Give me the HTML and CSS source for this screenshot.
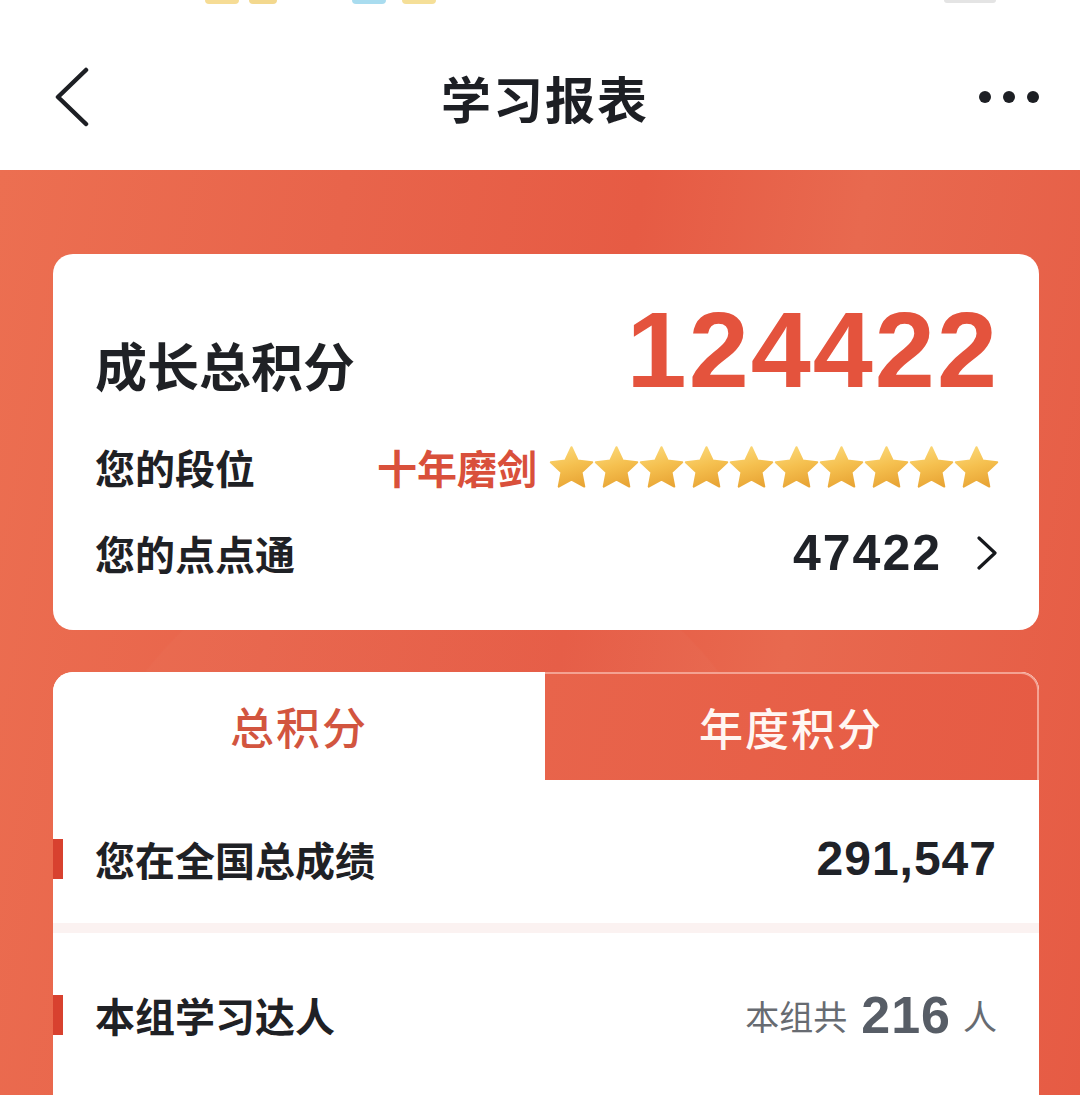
FILE: index.html
```html
<!DOCTYPE html>
<html lang="zh-CN">
<head>
<meta charset="utf-8">
<title>学习报表</title>
<link rel="stylesheet" href="styles.css">
</head>
<body>
<svg class="defs" width="0" height="0" aria-hidden="true">
  <defs>
    <linearGradient id="gold" x1="0.2" y1="0" x2="0.5" y2="1">
      <stop offset="0" stop-color="#fbd878"/>
      <stop offset="0.5" stop-color="#f5c04f"/>
      <stop offset="1" stop-color="#e9a636"/>
    </linearGradient>
    <symbol id="star" viewBox="0 0 24 24">
      <polygon points="12,1.2 15.29,8.27 23.03,9.22 17.33,14.53 18.82,22.18 12,18.4 5.18,22.18 6.67,14.53 0.97,9.22 8.71,8.27" fill="url(#gold)" stroke="url(#gold)" stroke-width="1.1" stroke-linejoin="round"/>
    </symbol>
  </defs>
</svg>
<div class="page">
  <div class="status">
    <span class="blob y1"></span><span class="blob y2"></span>
    <span class="blob b1"></span><span class="blob y3"></span>
    <span class="blob g1"></span>
  </div>
  <header class="nav">
    <div class="nav-left">
      <svg class="back" width="36" height="60" viewBox="0 0 36 60"><path d="M32 3 L4 30 L32 57" fill="none" stroke="#1d1f24" stroke-width="4.5" stroke-linecap="round" stroke-linejoin="round"/></svg>
    </div>
    <h1 class="nav-title">学习报表</h1>
    <div class="nav-right">
      <svg width="62" height="14" viewBox="0 0 62 14"><circle cx="7" cy="7" r="6" fill="#1d1f24"/><circle cx="31" cy="7" r="6" fill="#1d1f24"/><circle cx="55" cy="7" r="6" fill="#1d1f24"/></svg>
    </div>
  </header>

  <main class="hero">
    <section class="card summary">
      <div class="row total">
        <span class="label-lg">成长总积分</span>
        <span class="total-num">124422</span>
      </div>
      <div class="row mid">
        <span class="label">您的段位</span>
        <div class="rank">
          <span class="rank-name">十年磨剑</span>
          <div class="stars">
            <svg class="star"><use href="#star"/></svg>
            <svg class="star"><use href="#star"/></svg>
            <svg class="star"><use href="#star"/></svg>
            <svg class="star"><use href="#star"/></svg>
            <svg class="star"><use href="#star"/></svg>
            <svg class="star"><use href="#star"/></svg>
            <svg class="star"><use href="#star"/></svg>
            <svg class="star"><use href="#star"/></svg>
            <svg class="star"><use href="#star"/></svg>
            <svg class="star"><use href="#star"/></svg>
          </div>
        </div>
      </div>
      <div class="row mid">
        <span class="label">您的点点通</span>
        <div class="coins">
          <span class="coin-num">47422</span>
          <svg class="chev" width="22" height="34" viewBox="0 0 22 34"><path d="M3 2 L19 17 L3 32" fill="none" stroke="#16181c" stroke-width="3.2" stroke-linecap="round" stroke-linejoin="round"/></svg>
        </div>
      </div>
    </section>

    <section class="card board">
      <div class="tabs">
        <div class="tab active">总积分</div>
        <div class="tab alt">年度积分</div>
      </div>
      <div class="stat-row first">
        <i class="marker"></i>
        <span class="label grow">您在全国总成绩</span>
        <span class="stat-num">291,547</span>
      </div>
      <div class="divider"></div>
      <div class="stat-row second">
        <i class="marker"></i>
        <span class="label grow">本组学习达人</span>
        <div class="group">
          <span class="g-text">本组共</span>
          <span class="g-num">216</span>
          <span class="g-text">人</span>
        </div>
      </div>
    </section>
  </main>
</div>
</body>
</html>
```

FILE: styles.css
```css
* { box-sizing: border-box; margin: 0; padding: 0; }

html, body {
  width: 1080px;
  height: 1095px;
  overflow: hidden;
  background: #ffffff;
  font-family: "Noto Sans CJK SC", "Noto Sans", sans-serif;
  color: #1f2125;
}

.defs { position: absolute; width: 0; height: 0; }

.page {
  width: 1080px;
  height: 1095px;
  display: flex;
  flex-direction: column;
}

/* status strip remnants */
.status {
  height: 5px;
  display: flex;
  align-items: flex-start;
  background: #fff;
}
.blob { display: block; height: 4px; border-radius: 0 0 6px 6px; }
.y1 { width: 34px; margin-left: 205px; background: #f6dc95; }
.y2 { width: 28px; margin-left: 10px; background: #f3d88e; }
.b1 { width: 34px; margin-left: 75px; background: #a9dcef; }
.y3 { width: 34px; margin-left: 16px; background: #f5df98; }
.g1 { width: 52px; margin-left: 508px; height: 3px; background: #e4e4e4; }

/* nav */
.nav {
  height: 165px;
  padding-top: 19px;
  display: grid;
  grid-template-columns: 1fr auto 1fr;
  align-items: center;
  background: #fff;
}
.nav-left { padding-left: 54px; display: flex; align-items: center; }
.nav-right { display: flex; justify-content: flex-end; padding-right: 40px; }
.nav-title {
  font-size: 50px;
  font-weight: 700;
  color: #1d1f24;
  letter-spacing: 2px;
  line-height: 1;
  padding-left: 10px;
}

/* red area */
.hero {
  flex: 1;
  padding: 84px 41px 0 53px;
  background:
    radial-gradient(circle at 40% 78%, rgba(255,255,255,0.018) 0 360px, rgba(255,255,255,0) 362px),
    linear-gradient(100deg, #ec6f51 0%, #e8644b 28%, #e65b44 52%, #e8694f 70%, #e65b44 100%);
}

.card {
  background: #ffffff;
  border-radius: 20px;
}

/* summary card */
.summary {
  height: 376px;
  padding: 36px 42px 34px 42px;
  display: flex;
  flex-direction: column;
}
.row {
  display: flex;
  justify-content: space-between;
}
.row.total {
  height: 120px;
  align-items: baseline;
  margin-bottom: 14px;
}
.row.mid {
  height: 86px;
  align-items: center;
}
.label-lg {
  font-size: 52px;
  font-weight: 700;
  color: #1f2125;
}
.total-num {
  font-family: "Liberation Sans", Arial, sans-serif;
  font-size: 108px;
  line-height: 120px;
  font-weight: 700;
  color: #e4533d;
  letter-spacing: 2px;
  margin-right: -2px;
}
.label {
  font-size: 40px;
  font-weight: 700;
  color: #1f2125;
}
.rank { display: flex; align-items: center; }
.rank-name {
  font-size: 40px;
  font-weight: 700;
  color: #d9503b;
  margin-right: 12px;
}
.stars { display: flex; gap: 0; margin-right: -2px; }
.star { width: 45px; height: 45px; display: block; }

.coins { display: flex; align-items: center; }
.coin-num {
  font-family: "Liberation Sans", Arial, sans-serif;
  font-size: 50px;
  font-weight: 700;
  color: #1f2228;
  letter-spacing: 2px;
}
.chev { display: block; margin-left: 34px; margin-right: -1px; }

/* board card */
.board {
  margin-top: 42px;
  height: 423px;
  border-radius: 20px 18px 0 0;
  overflow: hidden;
}
.tabs {
  display: flex;
  height: 108px;
}
.tab {
  flex: 1;
  display: flex;
  align-items: center;
  justify-content: center;
  font-size: 44px;
  font-weight: 500;
  letter-spacing: 2px;
}
.tab.active { color: #d2553f; background: #fff; }
.tab.alt {
  color: #fff6f2;
  background: linear-gradient(100deg, #e8644b, #e65b44);
  border-top: 2px solid #f4a292;
  border-right: 2px solid #f4a292;
  border-top-right-radius: 18px;
}

.stat-row {
  display: flex;
  align-items: center;
  padding-right: 42px;
}
.stat-row.first { height: 143px; padding-top: 14px; }
.stat-row.second { height: 150px; padding-top: 14px; }
.marker {
  display: block;
  width: 10px;
  height: 40px;
  background: #d8412f;
  margin-right: 32px;
}
.grow { flex: 1; }
.stat-num {
  font-family: "Liberation Sans", Arial, sans-serif;
  font-size: 48px;
  font-weight: 700;
  color: #1f2228;
  letter-spacing: 1px;
}
.divider { height: 10px; background: #fbf2f1; }

.group { display: flex; align-items: center; }
.g-text { font-size: 34px; color: #676b71; }
.g-num {
  font-family: "Liberation Sans", Arial, sans-serif;
  font-size: 52px;
  font-weight: 700;
  color: #575d66;
  margin: 0 12px 0 14px;
  letter-spacing: 1px;
}
```
